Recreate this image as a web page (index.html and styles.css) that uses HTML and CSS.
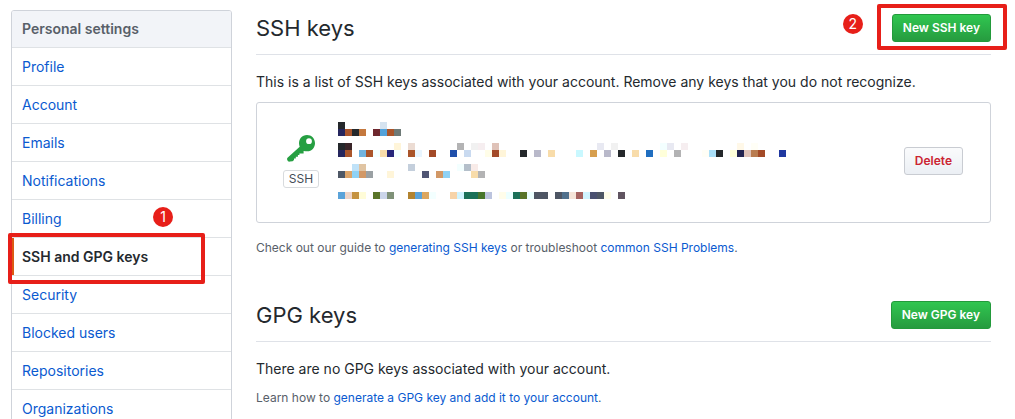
FILE: index.html
```html
<!DOCTYPE html>
<html lang="en">
<head>
<meta charset="utf-8">
<title>SSH and GPG keys</title>
<link rel="stylesheet" href="styles.css">
</head>
<body>
<div class="page">
  <nav class="menu" aria-label="Personal settings">
    <h3 class="menu-heading">Personal settings</h3>
    <a class="menu-item" href="#profile">Profile</a>
    <a class="menu-item" href="#account">Account</a>
    <a class="menu-item" href="#emails">Emails</a>
    <a class="menu-item" href="#notifications">Notifications</a>
    <a class="menu-item" href="#billing">Billing</a>
    <a class="menu-item selected" href="#keys" aria-current="page">SSH and GPG keys<span class="frame frame-menu"></span><span class="step step-menu">1</span></a>
    <a class="menu-item" href="#security">Security</a>
    <a class="menu-item" href="#blocked">Blocked users</a>
    <a class="menu-item" href="#repositories">Repositories</a>
    <a class="menu-item" href="#organizations">Organizations</a>
  </nav>
  <main class="content">
    <section class="section">
      <header class="subhead">
        <h2 class="title">SSH keys</h2>
        <div class="action">
          <button class="btn btn-primary" type="button">New SSH key</button>
          <span class="frame frame-action"></span>
          <span class="step step-action">2</span>
        </div>
      </header>
      <p class="lead">This is a list of SSH keys associated with your account. Remove any keys that you do not recognize.</p>
      <div class="key-box">
        <div class="key-type">
          <svg class="key-icon" viewBox="0 0 28 27" aria-hidden="true">
            <path fill="#269f42" fill-rule="evenodd" d="M20 0C14.800 0 12 4 12 8.300C12 9.600 12.300 10.700 12.700 11.700L.8 22.600C0 23.400 0 24 .2 24.800L.8 26C1.200 26.500 2 26.700 3 26.600L5.600 26.300L7 25V23.400H8.800V21.800H10.900V20H12.400V18.400H16.600V16C18 16.200 19.200 16.300 20.200 16.300C24.800 16.300 28 12.600 28 8.200C28 3.500 24.500 0 20 0ZM22 3.300A2.900 2.900 0 1 1 22 9.100A2.900 2.900 0 1 1 22 3.300Z"/>
          </svg>
          <span class="key-label">SSH</span>
        </div>
        <svg class="mosaic" viewBox="0 0 64 11" shape-rendering="crispEdges" role="img" aria-label="Redacted key details">
          <g>
            <path fill="#24282b" d="M0 0h1v1h-1zM2 1h1v1h-1zM0 3h1v1h-1zM26 4h1v1h-1zM40 4h1v1h-1zM54 4h1v1h-1z"/>
            <path fill="#d5e3f0" d="M6 0h1v1h-1z"/>
            <path fill="#25265e" d="M0 1h1v1h-1zM0 4h1v1h-1z"/>
            <path fill="#aa552b" d="M1 1h1v1h-1zM7 1h1v1h-1zM1 4h1v1h-1zM4 4h1v1h-1zM10 4h1v1h-1z"/>
            <path fill="#c4783e" d="M3 1h1v1h-1z"/>
            <path fill="#6e272e" d="M5 1h1v1h-1z"/>
            <path fill="#53a2da" d="M6 1h1v1h-1z"/>
            <path fill="#6e7a77" d="M8 1h1v1h-1z"/>
          </g>
          <g>
            <path fill="#3a2529" d="M1 3h1v1h-1z"/>
            <path fill="#fff5d9" d="M8 3h1v1h-1zM23 4h1v1h-1zM7 7h1v1h-1z"/>
            <path fill="#ecdcd3" d="M10 3h1v1h-1z"/>
            <path fill="#b3b3b4" d="M17 3h1v1h-1zM20 7h1v1h-1zM48 4h1v1h-1z"/>
            <path fill="#f1f1f1" d="M19 3h1v1h-1zM39 3h1v1h-1z"/>
            <path fill="#f6eef0" d="M20 3h1v1h-1zM49 3h1v1h-1z"/>
            <path fill="#dfc2b8" d="M22 3h1v1h-1zM58 4h1v1h-1z"/>
            <path fill="#e8e9f2" d="M37 3h1v1h-1zM47 3h1v1h-1z"/>
            <path fill="#f3ffff" d="M46 3h1v1h-1zM5 4h1v1h-1zM8 4h1v1h-1zM17 6h1v1h-1zM13 10h1v1h-1z"/>
            <path fill="#fff8e8" d="M57 3h1v1h-1z"/>
            <path fill="#fffef6" d="M59 3h1v1h-1zM52 4h1v1h-1z"/>
            <path fill="#72b4df" d="M3 4h1v1h-1z"/>
            <path fill="#f8dcaa" d="M6 4h1v1h-1zM30 4h1v1h-1zM42 4h1v1h-1zM19 7h1v1h-1z"/>
            <path fill="#25267a" d="M7 4h1v1h-1z"/>
            <path fill="#e8f5ff" d="M11 4h1v1h-1z"/>
            <path fill="#a34a28" d="M13 4h1v1h-1zM22 4h1v1h-1zM60 4h1v1h-1z"/>
            <path fill="#204faa" d="M16 4h1v1h-1z"/>
            <path fill="#c9daf0" d="M18 4h1v1h-1z"/>
            <path fill="#fffde8" d="M21 4h1v1h-1z"/>
            <path fill="#b9b9ca" d="M28 4h1v1h-1zM38 4h1v1h-1z"/>
            <path fill="#c9f8ff" d="M34 4h1v1h-1z"/>
            <path fill="#d79f4e" d="M36 4h1v1h-1z"/>
            <path fill="#206ec0" d="M44 4h1v1h-1z"/>
            <path fill="#ffffda" d="M46 4h1v1h-1zM56 4h1v1h-1z"/>
            <path fill="#aadff8" d="M53 4h1v1h-1z"/>
            <path fill="#232450" d="M57 4h1v1h-1z"/>
            <path fill="#b97c50" d="M59 4h1v1h-1z"/>
            <path fill="#2038a0" d="M63 4h1v1h-1z"/>
          </g>
          <g>
            <path fill="#c0e2f8" d="M2 6h1v1h-1z"/>
            <path fill="#e0c4a2" d="M3 6h1v1h-1z"/>
            <path fill="#c4cfdc" d="M10 6h1v1h-1z"/>
            <path fill="#b4bfca" d="M18 6h1v1h-1z"/>
            <path fill="#f8ebe8" d="M19 6h1v1h-1z"/>
            <path fill="#4e5866" d="M0 7h1v1h-1z"/>
            <path fill="#dca468" d="M1 7h1v1h-1z"/>
            <path fill="#8fd2f5" d="M2 7h1v1h-1zM15 7h1v1h-1z"/>
            <path fill="#d29866" d="M3 7h1v1h-1zM14 7h1v1h-1z"/>
            <path fill="#9aa0a3" d="M4 7h1v1h-1z"/>
            <path fill="#505674" d="M12 7h1v1h-1z"/>
          </g>
          <g>
            <path fill="#5ba3d9" d="M0 10h1v1h-1zM11 10h1v1h-1z"/>
            <path fill="#efd5c8" d="M1 10h1v1h-1z"/>
            <path fill="#c5923f" d="M2 10h1v1h-1z"/>
            <path fill="#fffcd8" d="M3 10h1v1h-1z"/>
            <path fill="#5a7529" d="M5 10h1v1h-1zM26 10h1v1h-1z"/>
            <path fill="#cbd5ea" d="M6 10h1v1h-1z"/>
            <path fill="#7f9178" d="M7 10h1v1h-1z"/>
            <path fill="#b28330" d="M10 10h1v1h-1z"/>
            <path fill="#dca760" d="M12 10h1v1h-1z"/>
            <path fill="#f7d3a8" d="M16 10h1v1h-1z"/>
            <path fill="#d0f4ff" d="M17 10h1v1h-1zM35 10h1v1h-1z"/>
            <path fill="#1a7058" d="M18 10h2v1h-2zM25 10h1v1h-1z"/>
            <path fill="#47752b" d="M20 10h1v1h-1z"/>
            <path fill="#bcc4de" d="M21 10h1v1h-1z"/>
            <path fill="#fffdea" d="M23 10h1v1h-1zM38 10h1v1h-1z"/>
            <path fill="#ecffff" d="M24 10h1v1h-1zM27 10h1v1h-1z"/>
            <path fill="#4e5664" d="M28 10h2v1h-2zM31 10h1v1h-1zM37 10h1v1h-1z"/>
            <path fill="#50708c" d="M32 10h1v1h-1z"/>
            <path fill="#f5e4d8" d="M33 10h1v1h-1z"/>
            <path fill="#a56360" d="M34 10h1v1h-1z"/>
            <path fill="#4a5070" d="M36 10h1v1h-1z"/>
            <path fill="#605460" d="M40 10h1v1h-1z"/>
          </g>
        </svg>
        <button class="btn btn-danger" type="button">Delete</button>
      </div>
      <p class="note">Check out our guide to <a href="#generate">generating SSH keys</a> or troubleshoot <a href="#problems">common SSH Problems</a>.</p>
    </section>
    <section class="section">
      <header class="subhead">
        <h2 class="title">GPG keys</h2>
        <div class="action">
          <button class="btn btn-primary" type="button">New GPG key</button>
        </div>
      </header>
      <p class="lead">There are no GPG keys associated with your account.</p>
      <p class="note">Learn how to <a href="#gpg">generate a GPG key and add it to your account</a>.</p>
    </section>
  </main>
</div>
</body>
</html>
```

FILE: styles.css
```css
* {
  box-sizing: border-box;
}

body {
  margin: 0;
  overflow: hidden;
  background: #fff;
  color: #24292e;
  font: 14px/20px Inter, "Liberation Sans", sans-serif;
}

h2, h3, p {
  margin: 0;
}

a {
  color: #0a5ad0;
  text-decoration: none;
}

.page {
  display: flex;
  align-items: flex-start;
  gap: 24px;
  padding: 10px 24px 0 11px;
}

.menu {
  flex: 0 0 221px;
  border: 1px solid #cfd3da;
  border-radius: 3px;
}

.menu-heading {
  padding: 8px 10px;
  border-bottom: 1px solid #dfe2e5;
  border-radius: 2px 2px 0 0;
  background: #f2f4f8;
  color: #586069;
  font-size: 14px;
  font-weight: 600;
}

.menu-item {
  display: block;
  position: relative;
  padding: 9px 10px 8px;
  border-bottom: 1px solid #dfe2e5;
}

.menu-item:last-child {
  border-bottom: 0;
}

.menu-item.selected {
  color: #24292e;
  font-weight: 600;
  box-shadow: inset 2px 0 #dc5a13;
}

/* Walkthrough marks laid over the controls */
.frame {
  position: absolute;
  border: 4px solid #e71f19;
  border-radius: 2px;
}

.frame-menu {
  inset: -5px 26px -9px -4px;
}

.frame-action {
  inset: -10px -16px -8px -15px;
}

.step {
  position: absolute;
  width: 20px;
  height: 20px;
  border-radius: 50%;
  background: #e71f19;
  color: #fff;
  font-size: 14px;
  font-weight: 400;
  line-height: 20px;
  text-align: center;
}

.step-menu {
  top: -31px;
  left: 141px;
}

.step-action {
  top: 0;
  left: -49px;
}

.content {
  flex: 1;
  min-width: 0;
}

.section + .section {
  margin-top: 40px;
}

.subhead {
  display: flex;
  align-items: center;
  justify-content: space-between;
  padding: 3px 0 11px;
  margin-bottom: 17px;
  border-bottom: 1px solid #dfe2e8;
}

.title {
  font-size: 22px;
  font-weight: 400;
  line-height: 30px;
}

.action {
  position: relative;
}

.btn {
  display: block;
  height: 28px;
  padding: 0 10px;
  border: 1px solid #c9ccd2;
  border-radius: 3px;
  font: 600 12px/18px Inter, "Liberation Sans", sans-serif;
  white-space: nowrap;
}

.btn-primary {
  border-color: #239a3b;
  background: linear-gradient(#30c650, #269b3f);
  color: #fff;
}

.btn-danger {
  margin-left: auto;
  background: linear-gradient(#fafbfc, #ebeff4);
  color: #cb2431;
}

.key-box {
  display: flex;
  align-items: center;
  padding: 19px 27px 23px 26px;
  margin: 10px 0 16px;
  border: 1px solid #cfd3da;
  border-radius: 3px;
}

.key-type {
  display: flex;
  flex-direction: column;
  align-items: center;
  gap: 8px;
  width: 36px;
  padding-top: 2px;
  margin-right: 19px;
}

.key-icon {
  width: 28px;
  height: 27px;
}

.key-label {
  padding: 0 5px;
  border: 1px solid #d8dbde;
  border-radius: 3px;
  color: #444d56;
  font-size: 12px;
  line-height: 16px;
}

.mosaic {
  width: 448px;
  height: 77px;
}

.note {
  color: #586069;
  font-size: 12px;
  line-height: 18px;
}

.lead + .note {
  margin-top: 10px;
}
```
